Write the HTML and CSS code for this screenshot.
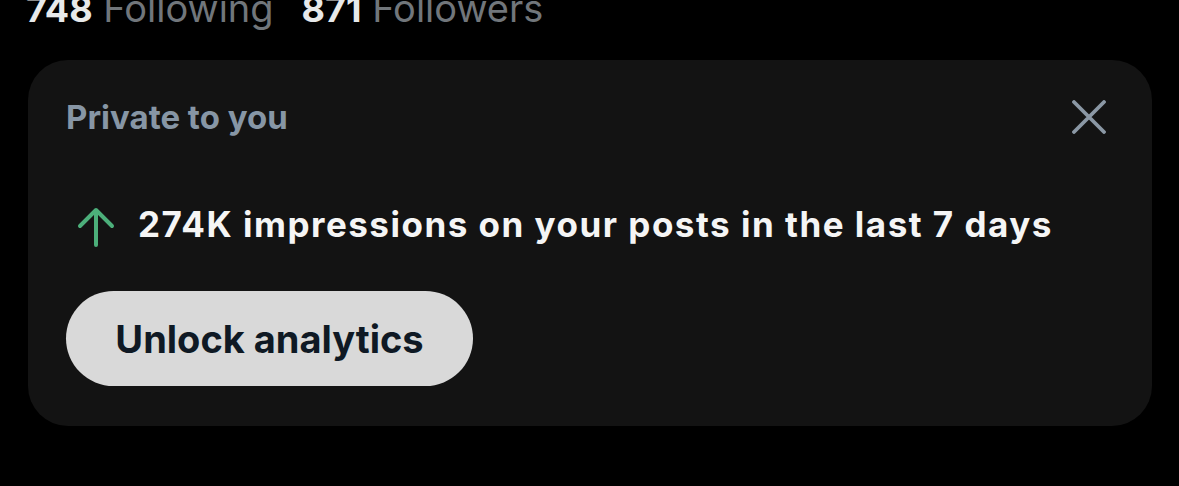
FILE: index.html
```html
<!DOCTYPE html>
<html>
<head>
<meta charset="utf-8">
<link rel="stylesheet" href="styles.css">
</head>
<body>
<div class="page">
  <div class="stats">
    <span class="stat"><b>748</b> Following</span>
    <span class="stat"><b>871</b> Followers</span>
  </div>
  <div class="card">
    <div class="card-head">
      <span class="private">Private to you</span>
      <svg class="close" viewBox="0 0 34 34" width="34" height="34"><path d="M2 2 L32 32 M32 2 L2 32" stroke="#8b98a5" stroke-width="3.8" stroke-linecap="round" fill="none"/></svg>
    </div>
    <div class="impressions">
      <svg class="arrow" viewBox="0 0 38 40" width="38" height="40"><path d="M19 38 V3 M3 19 L19 3 L35 19" stroke="#4caf7a" stroke-width="4" fill="none" stroke-linecap="round" stroke-linejoin="round"/></svg>
      <span>274K impressions on your posts in the last 7 days</span>
    </div>
    <button class="unlock">Unlock analytics</button>
  </div>
</div>
</body>
</html>
```
FILE: styles.css
```css
html, body {
  margin: 0;
  padding: 0;
  background: #000;
  width: 1179px;
  height: 486px;
  overflow: hidden;
  font-family: Inter, "Noto Sans", sans-serif;
}
.page {
  padding: 0 27px 0 28px;
}
.stats {
  display: flex;
  gap: 28px;
  height: 46px;
  margin-top: -15px;
  margin-bottom: 29px;
  margin-left: -2px;
  font-size: 38px;
  line-height: 46px;
  color: #71767b;
}
.stat b {
  color: #e7e9ea;
  font-weight: 700;
  font-size: 36px;
}
.card {
  background: #131313;
  border-radius: 40px;
  height: 366px;
  box-sizing: border-box;
  padding: 37px 38px 0 38px;
  display: flex;
  flex-direction: column;
  align-items: flex-start;
}
.card-head {
  align-self: stretch;
  display: flex;
  justify-content: space-between;
  align-items: center;
}
.private {
  font-size: 33px;
  font-weight: 700;
  color: #8796a5;
  line-height: 40px;
}
.close {
  margin-right: 8px;
}
.impressions {
  display: flex;
  align-items: center;
  gap: 23px;
  margin-top: 64px;
  margin-left: 11px;
  font-size: 35px;
  letter-spacing: 1.5px;
  font-weight: 700;
  color: #f5f5f5;
  line-height: 44px;
}
.arrow {
  margin-top: 6px;
}
.unlock {
  margin-top: 44px;
  height: 95px;
  width: 407px;
  border: none;
  border-radius: 48px;
  background: #d9d9d9;
  color: #0f1924;
  font-family: Inter, "Noto Sans", sans-serif;
  font-size: 38px;
  font-weight: 700;
  padding: 0;
}
```
